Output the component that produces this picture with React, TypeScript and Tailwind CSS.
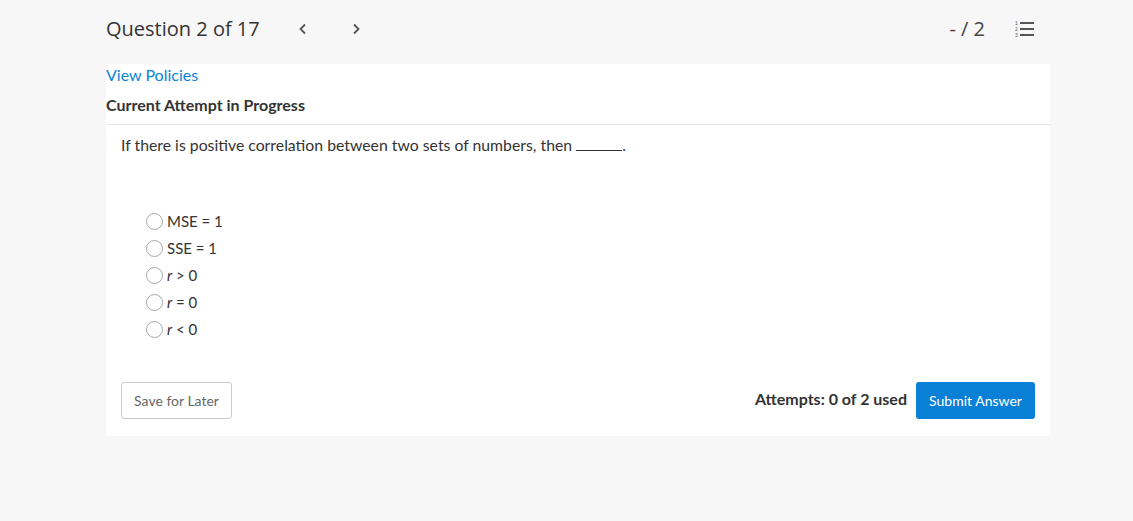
import { useState } from 'react';

const options = [
  { id: 'a', label: <>MSE = 1</> },
  { id: 'b', label: <>SSE = 1</> },
  { id: 'c', label: <><i>r</i> &gt; 0</> },
  { id: 'd', label: <><i>r</i> = 0</> },
  { id: 'e', label: <><i>r</i> &lt; 0</> },
];

function ListIcon() {
  return (
    <svg width="20" height="18" viewBox="0 0 20 18" className="text-[#555]">
      <text x="0" y="5" fontSize="5" fill="currentColor" fontFamily="Liberation Sans, sans-serif">1</text>
      <text x="0" y="11" fontSize="5" fill="currentColor" fontFamily="Liberation Sans, sans-serif">2</text>
      <text x="0" y="17" fontSize="5" fill="currentColor" fontFamily="Liberation Sans, sans-serif">3</text>
      <rect x="5" y="2" width="14" height="2" fill="currentColor" />
      <rect x="5" y="8" width="14" height="2" fill="currentColor" />
      <rect x="5" y="14" width="14" height="2" fill="currentColor" />
    </svg>
  );
}

export default function App() {
  const [selected, setSelected] = useState<string | null>(null);

  return (
    <div className="min-h-[521px] bg-[#f7f7f7] font-['Lato','Noto_Sans',sans-serif] text-[#333]">
      {/* header */}
      <div className="h-16 flex items-start pt-[15px] pl-[106px] pr-[98px]">
        <h1 className="font-['Open_Sans',sans-serif] text-[20px] leading-7 text-[#333]">Question 2 of 17</h1>
        <div className="flex items-center h-7 gap-[37px] ml-[35px] text-[#555]">
          <svg width="16" height="16" viewBox="0 0 16 16" fill="none" stroke="currentColor" strokeWidth="1.8">
            <path d="M10 3.5 L5.5 8 L10 12.5" />
          </svg>
          <svg width="16" height="16" viewBox="0 0 16 16" fill="none" stroke="currentColor" strokeWidth="1.8">
            <path d="M6 3.5 L10.5 8 L6 12.5" />
          </svg>
        </div>
        <div className="ml-auto flex items-center h-7 gap-[30px]">
          <span className="font-['Open_Sans',sans-serif] text-[20px] leading-7 text-[#444]">- / 2</span>
          <ListIcon />
        </div>
      </div>

      {/* card */}
      <div className="ml-[106px] w-[944px] bg-white">
        <a href="#" className="block pt-[1px] text-[16px] leading-5 text-[#0b84d8]">View Policies</a>
        <h2 className="mt-[10px] text-[16px] font-bold leading-5 text-[#333]">Current Attempt in Progress</h2>
        <div className="mt-[9px] border-t border-[#e5e5e5]" />

        <div className="px-[15px] pt-[10px]">
          <p className="text-[15.8px] leading-5">
            If there is positive correlation between two sets of numbers, then{' '}
            <span className="inline-block w-[46px] h-[15px] border-b border-[#333] align-baseline" />.
          </p>

          <div className="mt-[56px] ml-[25px] flex flex-col gap-[7px]">
            {options.map((o) => (
              <label key={o.id} className="flex items-center gap-[4px] h-5 text-[15px] cursor-pointer">
                <span
                  onClick={() => setSelected(o.id)}
                  className="w-[17px] h-[17px] rounded-full border border-[#a8a8a8] bg-white flex items-center justify-center"
                >
                  {selected === o.id && <span className="w-[9px] h-[9px] rounded-full bg-[#0b7fd7]" />}
                </span>
                <span>{o.label}</span>
              </label>
            ))}
          </div>

          <div className="mt-[43px] pb-[17px] flex items-center">
            <button className="h-[37px] w-[111px] border border-[#ccc] rounded-[3px] text-[14px] text-[#666] bg-white">
              Save for Later
            </button>
            <span className="ml-auto text-[16px] font-bold text-[#333] -mt-[3px]">Attempts: 0 of 2 used</span>
            <button className="ml-[9px] h-[37px] w-[119px] rounded-[3px] bg-[#0a7fd6] text-white text-[14px]">
              Submit Answer
            </button>
          </div>
        </div>
      </div>
    </div>
  );
}
